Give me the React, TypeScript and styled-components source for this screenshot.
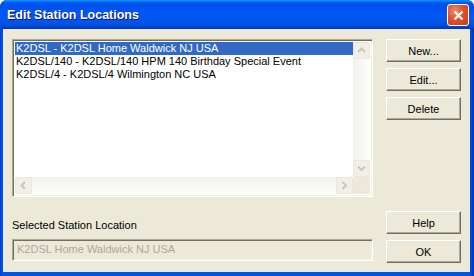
import React from "react"
import styled, { createGlobalStyle } from "styled-components"

const GlobalStyle = createGlobalStyle`
  html, body {
    margin: 0;
    padding: 0;
    background: #ffffff;
  }
  * {
    box-sizing: border-box;
  }
`

const Window = styled.div`
  width: 474px;
  height: 276px;
  display: flex;
  flex-direction: column;
  background: #0831d9;
  border-radius: 7px 7px 0 0;
  overflow: hidden;
  font-family: Tahoma, "Liberation Sans", sans-serif;
  font-size: 11px;
  color: #000;
`

const TitleBar = styled.div`
  height: 29px;
  flex: none;
  display: flex;
  align-items: center;
  justify-content: space-between;
  padding: 1px 5px 0 7px;
  background: linear-gradient(
    to bottom,
    #0997ff 0px,
    #0053ee 3px,
    #0050ee 6px,
    #0058f5 14px,
    #0055ea 22px,
    #0046d6 27px,
    #0033b0 29px
  );
`

const Title = styled.span`
  color: #fff;
  font-family: "Liberation Sans", sans-serif;
  font-weight: bold;
  font-size: 12.5px;
  text-shadow: 1px 1px 0 #0f1089;
`

const CloseButton = styled.div`
  width: 22px;
  height: 22px;
  border: 1px solid #fff;
  border-radius: 3px;
  background: radial-gradient(circle at 35% 30%, #f08a6c 0%, #e0522c 45%, #c43a15 100%);
  display: flex;
  align-items: center;
  justify-content: center;
`

const Frame = styled.div`
  flex: 1;
  display: flex;
  padding: 0 4px 4px 3px;
  background: linear-gradient(to right, #0041d8, #0055e5 3px, #0055e5 calc(100% - 4px), #002fb0);
`

const Body = styled.div`
  flex: 1;
  background: #ece9d8;
  display: grid;
  grid-template-columns: 361px 75px;
  column-gap: 13px;
  padding: 10px 9px 9px 9px;
`

const LeftColumn = styled.div`
  display: flex;
  flex-direction: column;
`

const RightColumn = styled.div`
  display: flex;
  flex-direction: column;
  gap: 6px;
`

const Sunken = styled.div`
  border-style: solid;
  border-width: 1px;
  border-color: #aca899 #ffffff #ffffff #aca899;
  box-shadow: inset 1px 1px 0 #716f64, inset -1px -1px 0 #f1efe2;
`

const ListBox = styled(Sunken)`
  height: 158px;
  padding: 2px;
  display: grid;
  grid-template-columns: 1fr 17px;
  grid-template-rows: 1fr 17px;
  background: #fff;
`

const Items = styled.div`
  display: flex;
  flex-direction: column;
`

const Item = styled.div<{ $selected?: boolean }>`
  height: 13px;
  line-height: 13px;
  padding-left: 1px;
  white-space: nowrap;
  background: ${(p) => (p.$selected ? "#316ac5" : "transparent")};
  color: ${(p) => (p.$selected ? "#fff" : "#000")};
`

const VTrack = styled.div`
  display: flex;
  flex-direction: column;
  justify-content: space-between;
  background: linear-gradient(to right, #f3f1ec, #fefefb);
`

const HTrack = styled.div`
  display: flex;
  justify-content: space-between;
  background: linear-gradient(to bottom, #f3f1ec, #fefefb);
`

const Corner = styled.div`
  background: #ece9d8;
`

const ArrowBox = styled.div`
  width: 17px;
  height: 17px;
  border: 1px solid #e8e6de;
  border-radius: 2px;
  background: #f1efe8;
  display: flex;
  align-items: center;
  justify-content: center;
`

const Label = styled.div`
  margin-top: 22px;
  height: 13px;
  line-height: 13px;
`

const TextField = styled(Sunken)`
  margin-top: 7px;
  height: 22px;
  line-height: 18px;
  padding: 0 4px;
  color: #aca899;
  background: #ece9d8;
`

const Button = styled.div`
  height: 23px;
  display: flex;
  align-items: center;
  justify-content: center;
  background: #ece9d8;
  border-style: solid;
  border-width: 1px;
  border-color: #ffffff #716f64 #716f64 #ffffff;
  box-shadow: inset -1px -1px 0 #aca899;
  flex: none;
`

const Spacer = styled.div`
  flex: 1;
`

type Dir = "up" | "down" | "left" | "right"

const Arrow = ({ dir }: { dir: Dir }) => {
  const pts: Record<Dir, string> = {
    up: "1,5 4.5,1.5 8,5",
    down: "1,1.5 4.5,5 8,1.5",
    left: "5,1 1.5,4.5 5,8",
    right: "1.5,1 5,4.5 1.5,8",
  }
  const vertical = dir === "up" || dir === "down"
  return (
    <ArrowBox>
      <svg width={vertical ? 9 : 7} height={vertical ? 7 : 9} viewBox={vertical ? "0 0 9 7" : "0 0 7 9"}>
        <polyline points={pts[dir]} fill="none" stroke="#c9c7ba" strokeWidth="2" />
      </svg>
    </ArrowBox>
  )
}

const stations = [
  "K2DSL - K2DSL Home Waldwick NJ USA",
  "K2DSL/140 - K2DSL/140 HPM 140 Birthday Special Event",
  "K2DSL/4 - K2DSL/4 Wilmington NC USA",
]

const App = () => {
  return (
    <>
      <GlobalStyle />
      <Window>
        <TitleBar>
          <Title>Edit Station Locations</Title>
          <CloseButton>
            <svg width="11" height="11" viewBox="0 0 11 11">
              <path d="M1.5 1.5 L9.5 9.5 M9.5 1.5 L1.5 9.5" stroke="#fff" strokeWidth="2.2" />
            </svg>
          </CloseButton>
        </TitleBar>
        <Frame>
          <Body>
            <LeftColumn>
              <ListBox>
                <Items>
                  {stations.map((s, i) => (
                    <Item key={s} $selected={i === 0}>
                      {s}
                    </Item>
                  ))}
                </Items>
                <VTrack>
                  <Arrow dir="up" />
                  <Arrow dir="down" />
                </VTrack>
                <HTrack>
                  <Arrow dir="left" />
                  <Arrow dir="right" />
                </HTrack>
                <Corner />
              </ListBox>
              <Label>Selected Station Location</Label>
              <TextField>K2DSL Home Waldwick NJ USA</TextField>
            </LeftColumn>
            <RightColumn>
              <Button>New...</Button>
              <Button>Edit...</Button>
              <Button>Delete</Button>
              <Spacer />
              <Button>Help</Button>
              <Button>OK</Button>
            </RightColumn>
          </Body>
        </Frame>
      </Window>
    </>
  )
}

export default App
